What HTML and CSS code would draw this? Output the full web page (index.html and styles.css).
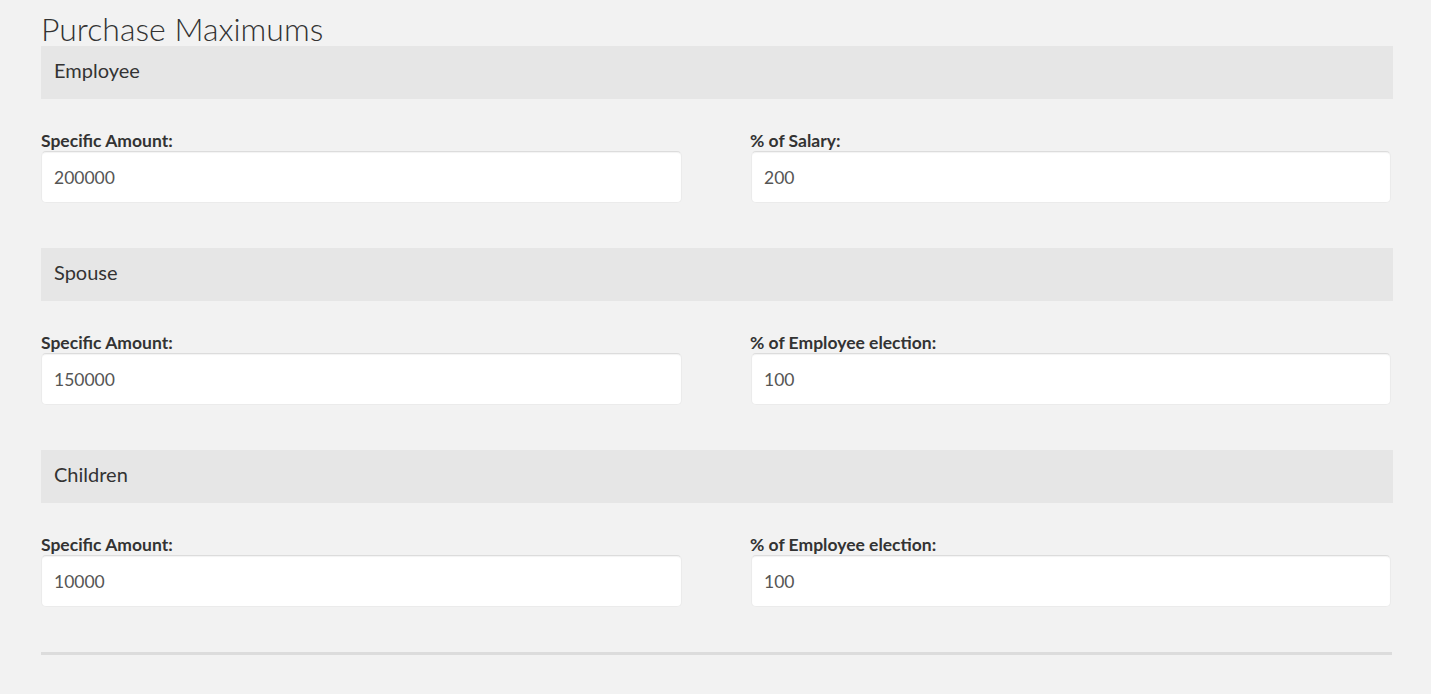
FILE: index.html
```html
<!DOCTYPE html>
<html lang="en">
<head>
    <meta charset="UTF-8">
    <meta name="viewport" content="width=device-width, initial-scale=1.0">
    <title>Purchase Maximums</title>
    <link rel="stylesheet" href="styles.css">
</head>
<body>
    <div class="page">
        <h2 class="title">Purchase Maximums</h2>

        <div class="group">
            <div class="group-head">Employee</div>
            <div class="row">
                <div class="field">
                    <label>Specific Amount:</label>
                    <input type="text" value="200000">
                </div>
                <div class="field">
                    <label>% of Salary:</label>
                    <input type="text" value="200">
                </div>
            </div>
        </div>

        <div class="group">
            <div class="group-head">Spouse</div>
            <div class="row">
                <div class="field">
                    <label>Specific Amount:</label>
                    <input type="text" value="150000">
                </div>
                <div class="field">
                    <label>% of Employee election:</label>
                    <input type="text" value="100">
                </div>
            </div>
        </div>

        <div class="group">
            <div class="group-head">Children</div>
            <div class="row">
                <div class="field">
                    <label>Specific Amount:</label>
                    <input type="text" value="10000">
                </div>
                <div class="field">
                    <label>% of Employee election:</label>
                    <input type="text" value="100">
                </div>
            </div>
        </div>

        <hr class="divider">
    </div>
</body>
</html>
```

FILE: styles.css
```css
*{ margin: 0; padding: 0; box-sizing: border-box;}
body{ background: #f2f2f2; font-family: Lato, "Open Sans", sans-serif; color: #333;}

.page{ padding: 8px 38px 0 41px;}

.title{ font-weight: 300; font-size: 32px; line-height: 38px; padding-top: 2px; height: 38px; color: #333;}

.group{ margin-bottom: 45px;}
.group-head{ background: #e6e6e6; height: 53px; line-height: 49px; padding-left: 13px; font-size: 20px; color: #333;}

.row{ display: grid; grid-template-columns: 641px 640px; column-gap: 69px; padding-top: 32px;}
.field label{ display: block; font-weight: 700; font-size: 17.5px; line-height: 20px; color: #333;}
.field:last-child label{ margin-left: -1px;}
.field input{ display: block; width: 100%; height: 52px; border: 1px solid #ebebeb; border-top-color: #dcdcdc; border-radius: 5px; background: #fff; box-shadow: inset 0 1px 1px rgba(0,0,0,.05); padding: 0 12px; font-family: Lato, sans-serif; font-size: 17.5px; color: #555; outline: none;}

.divider{ border: 0; height: 3px; background: #dcdcdc; width: 1351px;}
```
